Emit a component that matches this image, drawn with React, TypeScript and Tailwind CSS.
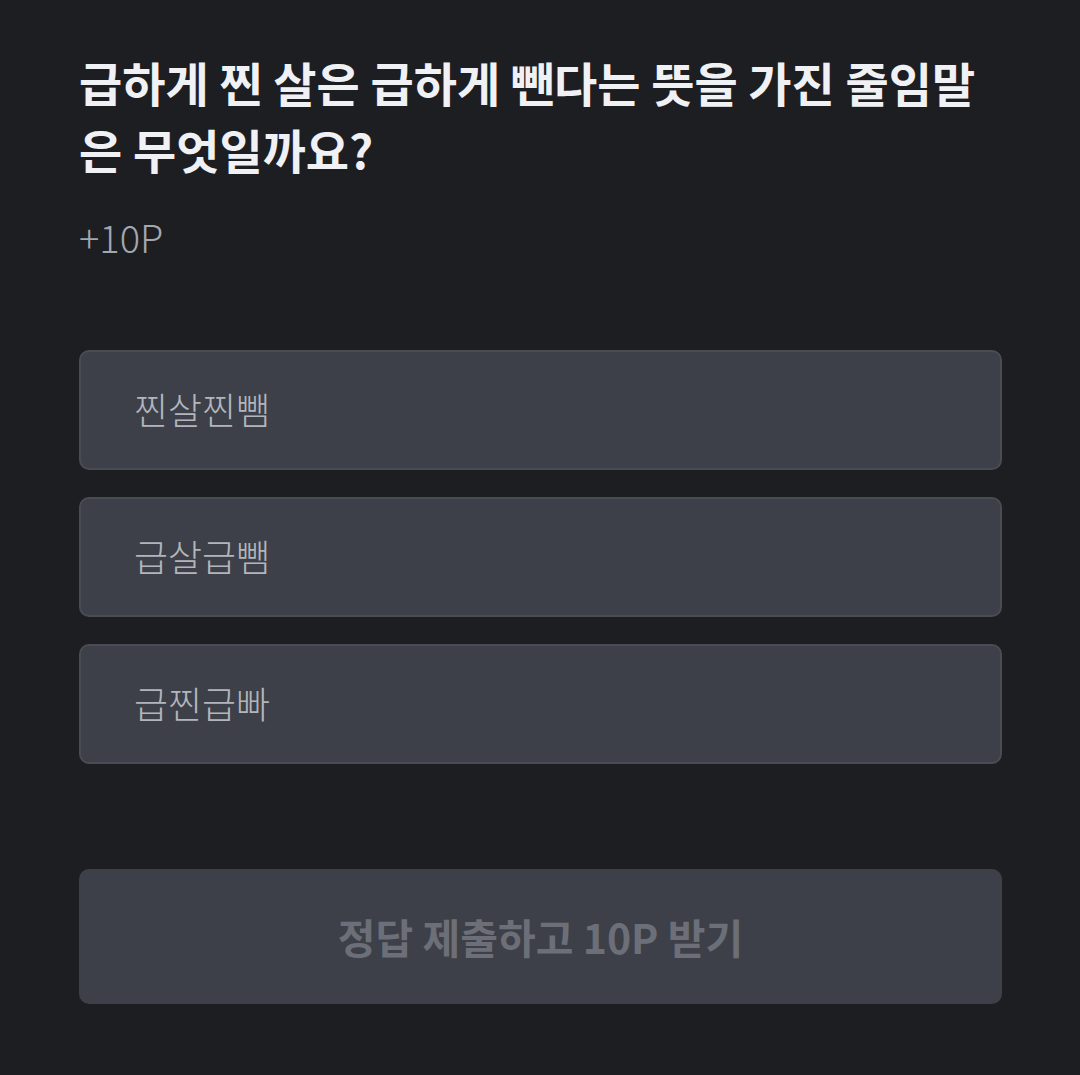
import { useState } from 'react'

const options = ['찐살찐뺌', '급살급뺌', '급찐급빠']

const font = {
  fontFamily: '"Noto Sans CJK KR", "Noto Sans", sans-serif',
}

export default function App() {
  const [selected, setSelected] = useState<number | null>(null)

  return (
    <div
      className="min-h-[1075px] w-full bg-[#1d1e22] pl-[79px] pr-[78px] pt-[48px]"
      style={font}
    >
      <h1 className="text-[47px] font-bold leading-[67px] text-[#f0f1f5]">
        급하게 찐 살은 급하게 뺀다는 뜻을 가진 줄임말은 무엇일까요?
      </h1>
      <p className="mt-[30px] text-[38px] font-light leading-[50px] text-[#a4a7ae]">
        +10P
      </p>

      <div className="mt-[88px] flex flex-col gap-[27px]">
        {options.map((opt, i) => (
          <button
            key={opt}
            type="button"
            onClick={() => setSelected(i)}
            className={`flex h-[120px] w-full items-center rounded-[10px] border-2 bg-[#3d4048] pl-[53px] text-left text-[37px] font-light text-[#b2b5bc] ${
              selected === i ? 'border-[#8b8e96]' : 'border-[#4a4c53]'
            }`}
          >
            {opt}
          </button>
        ))}
      </div>

      <button
        type="button"
        disabled={selected === null}
        className="mt-[105px] flex h-[135px] w-full items-center justify-center rounded-[10px] bg-[#3d4048] text-[41px] font-bold text-[#6c6f77]"
      >
        정답 제출하고 10P 받기
      </button>
    </div>
  )
}
